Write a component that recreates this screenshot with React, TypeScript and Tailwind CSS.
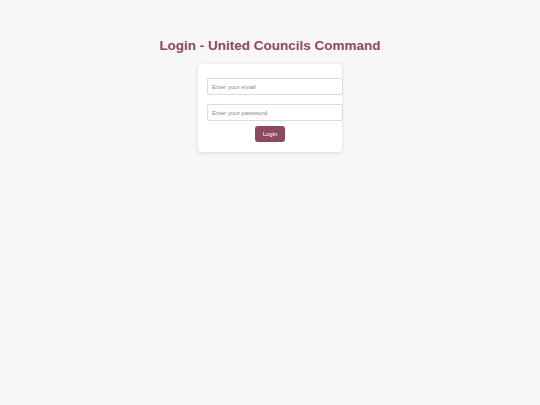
export default function App() {
  return (
    <div
      className="min-h-[405px] w-full bg-[#f7f7f7] flex flex-col items-center"
      style={{ fontFamily: '"Liberation Sans", Arial, sans-serif' }}
    >
      <h1 className="mt-[37px] text-[13.5px] leading-[18px] font-bold text-[#8c4862]">
        Login - United Councils Command
      </h1>
      <div className="mt-[9px] w-[144px] h-[88px] bg-white rounded-[4px] shadow-[0_1px_4px_rgba(0,0,0,0.12)] pt-[14px] pl-[9px] flex flex-col">
        <input
          type="email"
          placeholder="Enter your email"
          className="w-[136px] h-[17px] border border-[#dcdcdc] rounded-[2px] bg-white px-[4px] text-[6px] text-gray-700 placeholder:text-[#8a8a8a] outline-none"
        />
        <input
          type="password"
          placeholder="Enter your password"
          className="mt-[9px] w-[136px] h-[17px] border border-[#dcdcdc] rounded-[2px] bg-white px-[4px] text-[6px] text-gray-700 placeholder:text-[#8a8a8a] outline-none"
        />
        <button className="mt-[5px] ml-[48px] w-[30px] h-[16px] rounded-[3px] bg-[#8b4a60] text-white text-[6px] leading-none">
          Login
        </button>
      </div>
    </div>
  );
}
